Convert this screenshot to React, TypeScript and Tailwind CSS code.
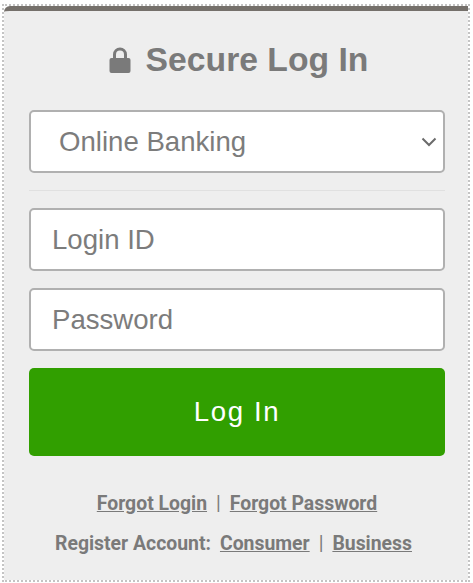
import React from "react";

const sans = "font-['Liberation_Sans',Arial,sans-serif]";
const roboto = "font-['Roboto',sans-serif]";

function Field({ label }: { label: string }) {
  return (
    <div className={`flex h-[63px] items-center rounded-[5px] border-2 border-[#b0b0b0] bg-white pl-[21px] text-[27.6px] leading-none text-[#7c7c7c] ${sans}`}>
      {label}
    </div>
  );
}

export default function App() {
  return (
    <div className="h-[583px] w-[473px] bg-white pl-[2px] pt-[4px]">
      <div className="h-[578px] w-[468px] border-2 border-dotted border-[#c4c4c4]">
        <div className="h-[574px] w-[464px] rounded-tl-[6px] border-t-[5px] border-[#75706b] bg-[#eeeeee] pl-[25px] pr-[23px] pt-[24px]">
          <h1 className={`flex h-[50px] items-center justify-center gap-[15px] pl-[3px] text-[33.7px] font-bold leading-none text-[#7a7a7a] ${sans}`}>
            <svg width="22" height="26" viewBox="0 0 22 26" aria-hidden="true">
              <path d="M5.5 12V7.5a5.5 5.5 0 0 1 11 0V12" fill="none" stroke="#7a7a7a" strokeWidth="3" />
              <rect x="0.5" y="11" width="21" height="15" rx="2" fill="#7a7a7a" />
            </svg>
            Secure Log In
          </h1>
          <div className={`mt-[25px] flex h-[63px] items-center justify-between rounded-[5px] border-2 border-[#b0b0b0] bg-white pl-[28px] pr-[6px] text-[27.6px] leading-none text-[#7c7c7c] ${sans}`}>
            Online Banking
            <svg width="16" height="10" viewBox="0 0 16 10" aria-hidden="true">
              <path d="M1.5 1.5 8 8l6.5-6.5" fill="none" stroke="#6b6b6b" strokeWidth="2" />
            </svg>
          </div>
          <div className="mt-[17px] h-px bg-[#e0e0e0]" />
          <div className="mt-[17px]"><Field label="Login ID" /></div>
          <div className="mt-[17px]"><Field label="Password" /></div>
          <button className={`mt-[17px] h-[88px] w-full rounded-[5px] bg-[#319f00] text-[27.6px] tracking-[1.6px] text-white ${sans}`}>
            Log In
          </button>
          <div className={`mt-[35px] flex justify-center gap-[9px] text-[19.4px] font-bold leading-[26px] text-[#7a7a7a] ${roboto}`}>
            <a className="underline">Forgot Login</a>
            <span className="font-normal">|</span>
            <a className="underline">Forgot Password</a>
          </div>
          <div className={`mt-[14px] flex justify-center gap-[9px] pr-[7px] text-[19.4px] font-bold leading-[26px] text-[#7a7a7a] ${roboto}`}>
            <span>Register Account:</span>
            <a className="underline">Consumer</a>
            <span className="font-normal">|</span>
            <a className="underline">Business</a>
          </div>
        </div>
      </div>
    </div>
  );
}
